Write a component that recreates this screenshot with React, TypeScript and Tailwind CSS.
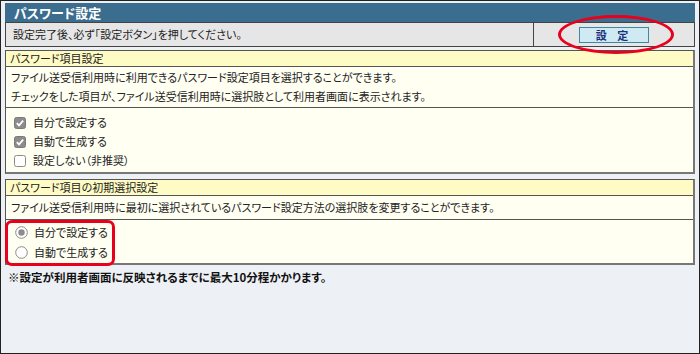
import React from 'react';

const jp = "font-['Noto_Sans_CJK_JP','Noto_Sans',sans-serif] [font-feature-settings:'palt']";

const SectionHeader = ({ children }: { children: React.ReactNode }) => (
  <div className="h-[16px] border-b border-[#555] bg-[#fffbc4] pl-[4px] text-[11px] leading-[15px] text-[#222]">
    {children}
  </div>
);

const Check = ({ checked }: { checked: boolean }) => (
  <svg width="12" height="12" viewBox="0 0 12 12" className="shrink-0">
    <rect
      x="0.5"
      y="0.5"
      width="11"
      height="11"
      rx="2"
      fill={checked ? '#8c8c8c' : '#fff'}
      stroke={checked ? '#7a7a7a' : '#8a8a8a'}
    />
    {checked && <path d="M2.8 6.2 L5 8.4 L9.2 3.6" fill="none" stroke="#fff" strokeWidth="1.7" />}
  </svg>
);

const Radio = ({ checked }: { checked: boolean }) => (
  <svg width="13" height="13" viewBox="0 0 13 13" className="shrink-0">
    <circle cx="6.5" cy="6.5" r="5.8" fill="#fff" stroke="#8a8a8a" />
    {checked && <circle cx="6.5" cy="6.5" r="3.2" fill="#8c8c8c" />}
  </svg>
);

export default function App() {
  return (
    <div
      className={`relative h-[354px] w-[700px] overflow-hidden border border-[#222] bg-[#edf0f5] px-[4px] pt-[2px] ${jp}`}
    >
      {/* title block */}
      <div className="h-[19px] bg-[#3b6d8f] pl-[9px] text-[13px] font-bold leading-[19px] text-white">
        パスワード設定
      </div>
      <div className="flex h-[25px] border border-[#444] bg-[#e6e6e6]">
        <div className="flex flex-1 items-center pl-[7px] text-[11px] text-[#222]">
          設定完了後、必ず「設定ボタン」を押してください。
        </div>
        <div className="flex w-[161px] items-center justify-center border-l border-[#444]">
          <button className="h-[16px] w-[70px] border border-[#3c8aa2] bg-[#cfeaf3] text-[11px] font-bold leading-[14px] tracking-[4px] text-[#1c2f7c]">
            設 定
          </button>
        </div>
      </div>

      {/* section 1 */}
      <div className="mt-[3px] border border-[#555] border-r-2 border-b-2 border-r-[#777] border-b-[#777] bg-[#fffff2]">
        <SectionHeader>パスワード項目設定</SectionHeader>
        <div className="flex h-[41px] flex-col justify-center border-b border-[#555] px-[5px] text-[11px] leading-[19px] text-[#222]">
          <div>ファイル送受信利用時に利用できるパスワード設定項目を選択することができます。</div>
          <div>チェックをした項目が、ファイル送受信利用時に選択肢として利用者画面に表示されます。</div>
        </div>
        <div className="flex h-[64px] flex-col gap-[6px] px-[8px] pt-[8px] text-[11px] text-[#222]">
          {(
            [
              ['自分で設定する', true],
              ['自動で生成する', true],
              ['設定しない（非推奨）', false],
            ] as [string, boolean][]
          ).map(([label, checked]) => (
            <div key={label} className="flex h-[13px] items-center gap-[7px]">
              <Check checked={checked} />
              <span>{label}</span>
            </div>
          ))}
        </div>
      </div>

      {/* section 2 */}
      <div className="mt-[5px] border border-[#555] border-r-2 border-b-2 border-r-[#777] border-b-[#777] bg-[#fffff2]">
        <SectionHeader>パスワード項目の初期選択設定</SectionHeader>
        <div className="flex h-[24px] items-center border-b border-[#555] px-[5px] text-[11px] text-[#222]">
          ファイル送受信利用時に最初に選択されているパスワード設定方法の選択肢を変更することができます。
        </div>
        <div className="flex h-[43px] flex-col gap-[7px] px-[9px] pt-[6px] text-[11px] text-[#222]">
          {(
            [
              ['自分で設定する', true],
              ['自動で生成する', false],
            ] as [string, boolean][]
          ).map(([label, checked]) => (
            <div key={label} className="flex h-[13px] items-center gap-[6px]">
              <Radio checked={checked} />
              <span>{label}</span>
            </div>
          ))}
        </div>
      </div>

      <div className="mt-[4px] pl-[3px] text-[11.5px] font-bold leading-[16px] text-[#111]">
        ※設定が利用者画面に反映されるまでに最大10分程かかります。
      </div>

      {/* red callouts */}
      <div className="pointer-events-none absolute left-[557px] top-[14px] h-[39px] w-[116px] rounded-[50%] border-[3px] border-[#e8001c]" />
      <div className="pointer-events-none absolute left-[4px] top-[219px] h-[46px] w-[110px] rounded-[7px] border-[3px] border-[#e8001c]" />
    </div>
  );
}
